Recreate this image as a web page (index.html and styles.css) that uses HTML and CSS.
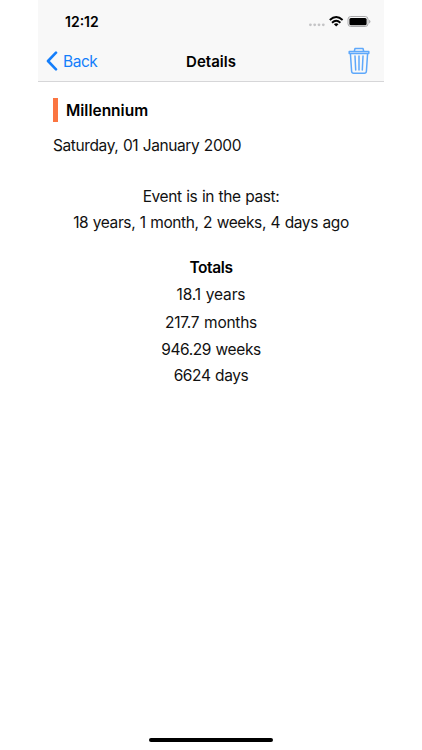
FILE: index.html
```html
<!DOCTYPE html>
<html lang="en">
<head>
<meta charset="utf-8">
<title>Details</title>
<link rel="stylesheet" href="styles.css">
</head>
<body>
<div class="phone">
  <header class="header">
    <div class="status">
      <span class="clock">12:12</span>
      <svg class="indicators" width="64" height="14" viewBox="0 0 64 14">
        <g fill="#c4c4c6"><circle cx="3.4" cy="10.8" r="1.4"/><circle cx="7.7" cy="10.8" r="1.4"/><circle cx="12" cy="10.8" r="1.4"/><circle cx="16.3" cy="10.8" r="1.4"/></g>
        <g fill="none" stroke="#000" stroke-width="1.9"><path d="M22.8 6Q29.2 .1 35.6 6"/><path d="M25 8.7Q29.2 4.9 33.4 8.7"/></g>
        <path d="M26.9 10.2Q29.2 8.3 31.5 10.2L29.2 12.4Z"/>
        <rect x="41" y="2.5" width="20" height="10" rx="2.8" fill="none" stroke="#a8a8aa"/>
        <rect x="42.4" y="3.9" width="17.2" height="7.3" rx="1.5"/>
        <path d="M62.1 5.7Q63.4 6.1 63.4 7.5T62.1 9.4Z" fill="#a8a8aa"/>
      </svg>
    </div>
    <nav class="nav">
      <a class="back"><svg width="12" height="20" viewBox="0 0 12 20"><path d="M10 1.7L2 10L10 18.3" fill="none" stroke="#147efb" stroke-width="2.6" stroke-linecap="round" stroke-linejoin="round"/></svg><span>Back</span></a>
      <h1 class="title">Details</h1>
      <svg class="trash" width="22" height="28" viewBox="0 0 22 28" fill="none" stroke="#5ea8fb" stroke-width="1.5" stroke-linecap="round" stroke-linejoin="round">
        <path d="M6.3 4.3L7 1.5H15L15.7 4.3M1.2 4.4H20.8V6.4H1.2ZM2.4 6.5L3.6 24.3Q3.8 26.3 5.6 26.3H16.4Q18.2 26.3 18.4 24.3L19.6 6.5"/>
        <path d="M7 9L7.7 23M11 9V23M15 9L14.3 23"/>
      </svg>
    </nav>
  </header>
  <main class="content">
    <div class="event"><span class="marker"></span><h2 class="name">Millennium</h2></div>
    <p class="date">Saturday, 01 January 2000</p>
    <section class="elapsed">
      <p class="past">Event is in the past:</p>
      <p class="ago">18 years, 1 month, 2 weeks, 4 days ago</p>
    </section>
    <section class="totals">
      <h3 class="heading">Totals</h3>
      <p class="years">18.1 years</p>
      <p class="months">217.7 months</p>
      <p class="weeks">946.29 weeks</p>
      <p class="days">6624 days</p>
    </section>
  </main>
  <div class="home"></div>
</div>
</body>
</html>
```
FILE: styles.css
```css
* { box-sizing: border-box; }
body { margin: 0; background: #fff; font-family: Inter, sans-serif; color: #111; }
h1, h2, h3, p { margin: 0; font-size: inherit; }
svg { display: block; flex: none; }
.phone { width: 346px; height: 750px; margin-left: 38px; display: flex; flex-direction: column; }
.header { height: 82px; background: #f8f8f8; border-bottom: 1px solid #d6d6d8; }
.status { height: 41px; display: flex; justify-content: space-between; padding: 14px 13px 0 27px; }
.clock { font-size: 14px; line-height: 15px; font-weight: 600; color: #000; }
.nav { height: 40px; display: grid; grid-template-columns: 1fr auto 1fr; align-items: center; padding: 0 8px; }
.back { display: flex; align-items: center; gap: 5px; color: #147efb; font-size: 15.5px; letter-spacing: -0.45px; }
.title { font-size: 15px; font-weight: 600; color: #000; }
.trash { justify-self: end; margin-right: 6px; }
.content { flex: 1; padding: 16px 15px 0; font-size: 15.5px; line-height: 26px; letter-spacing: -0.4px; word-spacing: 0.6px; white-space: nowrap; }
.event { display: flex; align-items: center; gap: 8px; height: 24px; }
.marker { width: 5px; height: 24px; background: #fb7541; }
.name { padding-top: 2px; font-size: 15.5px; font-weight: 600; letter-spacing: 0; color: #000; }
.date { margin-top: 11px; }
.elapsed { margin-top: 25px; text-align: center; }
.totals { margin-top: 18px; text-align: center; line-height: 27px; }
.heading { font-weight: 600; color: #000; }
.years { letter-spacing: -0.15px; }
.months { line-height: 29px; letter-spacing: -0.25px; }
.weeks { line-height: 26px; }
.days { line-height: 25px; }
.home { align-self: center; width: 124px; height: 4px; margin-bottom: 8px; border-radius: 3px; background: #000; }
```
